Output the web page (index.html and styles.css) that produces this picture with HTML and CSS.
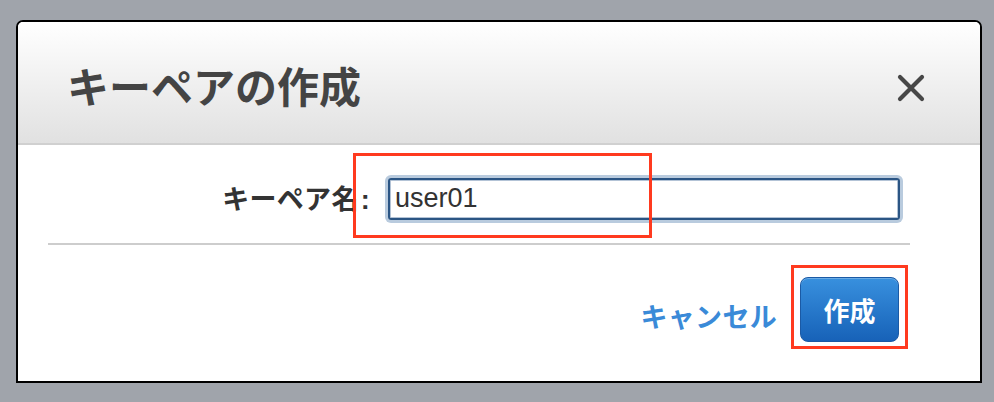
FILE: index.html
```html
<!DOCTYPE html>
<html lang="ja">
<head>
<meta charset="utf-8">
<link rel="stylesheet" href="styles.css">
</head>
<body>
<div class="dialog">
  <div class="header">
    <h1 class="title">キーペアの作成</h1>
    <button class="close" aria-label="閉じる">
      <svg width="28" height="28" viewBox="0 0 28 28"><path d="M3 3 L25 25 M25 3 L3 25" stroke="#474747" stroke-width="4.2" stroke-linecap="round"/></svg>
    </button>
  </div>
  <div class="content">
    <div class="field">
      <label class="label">キーペア名<span class="colon">:</span></label>
      <div class="input">user01</div>
    </div>
    <div class="sep"></div>
    <div class="footer">
      <a class="cancel">キャンセル</a>
      <button class="create">作成</button>
    </div>
  </div>
</div>
<div class="mark mark-input"></div>
<div class="mark mark-button"></div>
</body>
</html>
```
FILE: styles.css
```css
html, body {
  margin: 0;
  padding: 0;
}
body {
  background: #a0a4ab;
  width: 994px;
  height: 402px;
  overflow: hidden;
  padding: 20px 0 0 16px;
  box-sizing: border-box;
  position: relative;
  font-family: "Noto Sans CJK JP", "Noto Sans", sans-serif;
}
.dialog {
  width: 966px;
  height: 363px;
  box-sizing: border-box;
  border: 2px solid #000;
  border-radius: 7px 7px 0 0;
  background: #fff;
  overflow: hidden;
}
.header {
  border-bottom: 2px solid #d0d0d0;
  background: linear-gradient(#ffffff, #e1e1e1);
  display: flex;
  align-items: center;
  justify-content: space-between;
  padding: 4px 55px 0 49px;
  box-sizing: content-box;
  height: 117px;
}
.title {
  margin: 0;
  font-size: 42px;
  line-height: 48px;
  font-weight: 700;
  color: #444;
}
.close {
  border: 0;
  background: none;
  padding: 0;
  width: 28px;
  height: 28px;
  margin-top: 6px;
  display: flex;
}
.content {
  padding-top: 30px;
}
.field {
  display: flex;
  align-items: center;
  height: 47px;
}
.label {
  width: 352px;
  flex: none;
  text-align: right;
  font-size: 27px;
  font-weight: 700;
  color: #333;
  line-height: 36px;
  padding-right: 18px;
  letter-spacing: 0.3px;
}
.colon {
  font-family: "Liberation Sans", Arial, sans-serif;
  font-weight: 700;
  margin-left: 2px;
}
.input {
  width: 512px;
  height: 42px;
  box-sizing: border-box;
  border: 2px solid #2b5584;
  border-radius: 3px;
  box-shadow: 0 0 0 3px #b9cbde, inset 0 0 0 1px #b3c3d6;
  font-family: "Liberation Sans", Arial, sans-serif;
  font-size: 27px;
  line-height: 36px;
  color: #333;
  padding-left: 5px;
}
.sep {
  margin: 21px 70px 0 30px;
  height: 2px;
  background: #cdcdcd;
}
.footer {
  display: flex;
  justify-content: flex-end;
  align-items: center;
  padding: 32px 81px 0 0;
}
.cancel {
  font-size: 27px;
  font-weight: 700;
  color: #3a8ad8;
  line-height: 36px;
  margin-right: 23px;
  margin-top: 12px;
  letter-spacing: 0.3px;
}
.create {
  width: 99px;
  height: 65px;
  box-sizing: border-box;
  border: 1px solid #1b5aa5;
  border-radius: 8px;
  background: linear-gradient(#3890de, #1762b8);
  box-shadow: inset 0 1px 0 rgba(255,255,255,0.25);
  color: #fff;
  font-family: "Noto Sans CJK JP", sans-serif;
  font-size: 26px;
  font-weight: 700;
  padding: 0;
}
.mark {
  position: absolute;
  border: 3px solid #ff3a1f;
  box-sizing: border-box;
}
.mark-input {
  left: 353px;
  top: 153px;
  width: 299px;
  height: 85px;
}
.mark-button {
  left: 791px;
  top: 265px;
  width: 117px;
  height: 84px;
}
```
